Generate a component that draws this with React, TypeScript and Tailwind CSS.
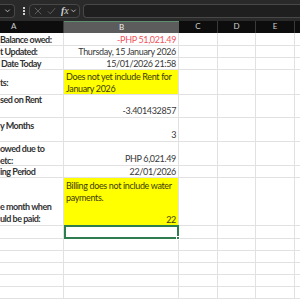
import React from "react";

const cols = "grid grid-cols-[64px_115px_39px_38px_39px_1fr]";
const cell = "border-r border-[#e1e1e1]";

type Row = {
  h: string;
  a?: React.ReactNode;
  b?: React.ReactNode;
  yellow?: boolean;
  selected?: boolean;
};

function Chevron({ className }: { className?: string }) {
  return (
    <svg viewBox="0 0 8 8" className={className} fill="none" stroke="currentColor" strokeWidth="1">
      <path d="M1.5 3 L4 5.5 L6.5 3" />
    </svg>
  );
}

const rows: Row[] = [
  {
    h: "h-[13px]",
    a: <div className="pt-[1px] leading-[11px]">Balance owed:</div>,
    b: <div className="pt-[1px] text-right leading-[11px] text-[#f0525c]">-PHP 51,021.49</div>,
  },
  {
    h: "h-[12px]",
    a: <div className="leading-[11px]">t Updated:</div>,
    b: <div className="text-right leading-[11px]">Thursday, 15 January 2026</div>,
  },
  {
    h: "h-[12px]",
    a: <div className="pl-[1px] leading-[11px]">Date Today</div>,
    b: <div className="text-right leading-[11px]">15/01/2026 21:58</div>,
  },
  {
    h: "h-[25px]",
    yellow: true,
    a: <div className="flex h-full items-center leading-[11px]">ts:</div>,
    b: (
      <div className="pl-[2px] pt-[1px] leading-[12px]">
        Does not yet include Rent for
        <br />
        January 2026
      </div>
    ),
  },
  {
    h: "h-[23px]",
    a: <div className="leading-[9px]">sed on Rent</div>,
    b: <div className="flex h-full items-end justify-end pb-[1px] leading-[11px]">-3.401432857</div>,
  },
  {
    h: "h-[24px]",
    a: <div className="pt-[2px] leading-[12px]">y Months</div>,
    b: <div className="flex h-full items-end justify-end pb-[1px] leading-[11px]">3</div>,
  },
  {
    h: "h-[24px]",
    a: (
      <div className="pt-[1px] leading-[12px]">
        owed due to
        <br />
        etc:
      </div>
    ),
    b: <div className="flex h-full items-end justify-end pb-[1px] leading-[11px]">PHP 6,021.49</div>,
  },
  {
    h: "h-[12px]",
    a: <div className="leading-[11px]">ing Period</div>,
    b: <div className="text-right leading-[11px]">22/01/2026</div>,
  },
  {
    h: "h-[48px]",
    yellow: true,
    a: (
      <div className="flex h-full flex-col justify-end leading-[12px]">
        <span>e month when</span>
        <span>uld be paid:</span>
      </div>
    ),
    b: (
      <div className="flex h-full flex-col justify-between pl-[2px] pt-[2px] leading-[12px]">
        <div>
          Billing does not include water
          <br />
          payments.
        </div>
        <div className="text-right leading-[10px]">22</div>
      </div>
    ),
  },
  { h: "h-[13px]", selected: true },
  { h: "h-[12px]" },
  { h: "h-[12px]" },
  { h: "h-[12px]" },
  { h: "h-[12px]" },
  { h: "h-[12px]" },
];

export default function App() {
  return (
    <div className="h-[300px] w-[300px] overflow-hidden bg-white font-['Lato',sans-serif] text-[9px] tracking-[-0.35px] text-[#383838]">
      {/* formula bar */}
      <div className="flex h-[21px] items-center bg-[#2a2a2a]">
        <div className="flex h-[14px] w-[15px] items-center justify-end rounded-r-[4px] border border-l-0 border-[#484848] bg-[#202020] pr-[3px]">
          <Chevron className="h-[7px] w-[7px] text-[#c8c8c8]" />
        </div>
        <div className="ml-[5px] flex w-[8px] flex-col items-center gap-[1px]">
          <span className="h-[2px] w-[2px] bg-[#d0d0d0]" />
          <span className="h-[2px] w-[2px] bg-[#d0d0d0]" />
          <span className="h-[2px] w-[2px] bg-[#d0d0d0]" />
        </div>
        <div className="ml-[1px] flex h-[14px] w-[51px] items-center rounded-[4px] border border-[#484848] bg-[#252525] pl-[4px]">
          <svg viewBox="0 0 10 10" className="h-[8px] w-[8px] text-[#6d6d6d]" fill="none" stroke="currentColor" strokeWidth="1">
            <path d="M1 1 L9 9 M9 1 L1 9" />
          </svg>
          <svg viewBox="0 0 10 10" className="ml-[5px] h-[8px] w-[9px] text-[#6d6d6d]" fill="none" stroke="currentColor" strokeWidth="1">
            <path d="M0.5 5.5 L3.5 8.5 L9.5 1.5" />
          </svg>
          <span className="ml-[5px] font-['Liberation_Serif',serif] text-[10px] italic leading-[10px] tracking-normal text-[#d4d4d4]">
            <b>f</b>x
          </span>
          <Chevron className="ml-[1px] h-[7px] w-[7px] text-[#c8c8c8]" />
        </div>
        <div className="ml-[3px] h-[14px] flex-1 rounded-l-[4px] border border-r-0 border-[#484848] bg-[#1f1f1f]" />
      </div>

      {/* column headers */}
      <div className={`${cols} h-[12px] bg-[#0d0d0d] text-[8px] leading-[11px] tracking-normal text-[#cfcfcf]`}>
        <div className="border-r border-[#3a3a3a] pl-[11px]">A</div>
        <div className="border-t border-[#5f8f70] bg-[#5c5c5c] text-center text-[#f0f0f0]">B</div>
        <div className="border-r border-[#3a3a3a] text-center">C</div>
        <div className="border-r border-[#3a3a3a] text-center">D</div>
        <div className="border-r border-[#3a3a3a] text-center">E</div>
        <div />
      </div>

      {rows.map((r, i) => (
        <div key={i} className={`${cols} ${r.h} border-b border-[#e1e1e1]`}>
          <div className={`${cell} overflow-hidden whitespace-nowrap font-bold tracking-[-0.5px] text-[#333333]`}>{r.a}</div>
          {r.selected ? (
            <div className="relative -mt-[1px] h-[14px] border-2 border-[#2f7d4f]">
              <span className="absolute -right-[3px] -bottom-[3px] h-[4px] w-[4px] border border-white bg-[#2f7d4f]" />
            </div>
          ) : (
            <div
              className={`${cell} ${r.yellow ? "bg-[#ffff00] text-[#3d3a00]" : ""} overflow-hidden whitespace-nowrap pr-[2px]`}
            >
              {r.b}
            </div>
          )}
          <div className={cell} />
          <div className={cell} />
          <div className={cell} />
          <div />
        </div>
      ))}
    </div>
  );
}
